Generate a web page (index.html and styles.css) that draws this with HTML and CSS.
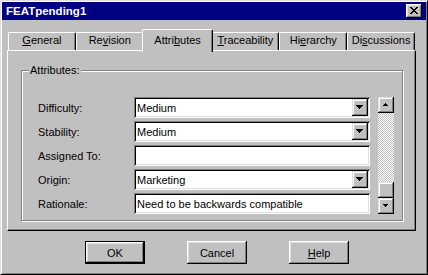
FILE: index.html
```html
<!DOCTYPE html>
<html>
<head>
<meta charset="utf-8">
<link rel="stylesheet" href="styles.css">
</head>
<body>
<div class="window">
  <div class="titlebar">
    <span class="title">FEATpending1</span>
    <span class="close"><svg width="8" height="7" viewBox="0 0 8 7" shape-rendering="crispEdges"><path d="M0 0h2v1H0z M6 0h2v1H6z M1 1h2v1H1z M5 1h2v1H5z M2 2h4v1H2z M3 3h2v1H3z M2 4h4v1H2z M1 5h2v1H1z M5 5h2v1H5z M0 6h2v1H0z M6 6h2v1H6z" fill="#000"/></svg></span>
  </div>
  <div class="content">
    <div class="tabs">
      <div class="tab"><u>G</u>eneral</div>
      <div class="tab">Re<u>v</u>ision</div>
      <div class="tab selected">Attri<u>b</u>utes</div>
      <div class="tab"><u>T</u>raceability</div>
      <div class="tab">Hi<u>e</u>rarchy</div>
      <div class="tab">Di<u>s</u>cussions</div>
    </div>
    <div class="panel">
      <div class="group">
        <span class="group-title">Attributes:</span>
        <div class="group-body">
          <div class="rows">
            <div class="row"><span class="label">Difficulty:</span><div class="field"><span class="value">Medium</span><span class="drop"><svg width="7" height="4" viewBox="0 0 7 4" shape-rendering="crispEdges"><path d="M0 0h7v1H0z M1 1h5v1H1z M2 2h3v1H2z M3 3h1v1H3z" fill="#000"/></svg></span></div></div>
            <div class="row"><span class="label">Stability:</span><div class="field"><span class="value">Medium</span><span class="drop"><svg width="7" height="4" viewBox="0 0 7 4" shape-rendering="crispEdges"><path d="M0 0h7v1H0z M1 1h5v1H1z M2 2h3v1H2z M3 3h1v1H3z" fill="#000"/></svg></span></div></div>
            <div class="row"><span class="label">Assigned To:</span><div class="field"><span class="value"></span></div></div>
            <div class="row"><span class="label">Origin:</span><div class="field"><span class="value">Marketing</span><span class="drop"><svg width="7" height="4" viewBox="0 0 7 4" shape-rendering="crispEdges"><path d="M0 0h7v1H0z M1 1h5v1H1z M2 2h3v1H2z M3 3h1v1H3z" fill="#000"/></svg></span></div></div>
            <div class="row"><span class="label">Rationale:</span><div class="field"><span class="value">Need to be backwards compatible</span></div></div>
          </div>
          <div class="scrollbar">
            <span class="sb-btn"><svg width="5" height="3" viewBox="0 0 5 3" shape-rendering="crispEdges"><path d="M2 0h1v1H2z M1 1h3v1H1z M0 2h5v1H0z" fill="#000"/></svg></span>
            <span class="sb-track"></span>
            <span class="sb-thumb"></span>
            <span class="sb-btn"><svg width="5" height="3" viewBox="0 0 5 3" shape-rendering="crispEdges"><path d="M0 0h5v1H0z M1 1h3v1H1z M2 2h1v1H2z" fill="#000"/></svg></span>
          </div>
        </div>
      </div>
    </div>
    <div class="buttons">
      <span class="btn default">OK</span>
      <span class="btn">Cancel</span>
      <span class="btn"><u>H</u>elp</span>
    </div>
  </div>
</div>
</body>
</html>
```

FILE: styles.css
```css
html, body {
  margin: 0;
  padding: 0;
  background: #c0c0c0;
}
body {
  font-family: "Liberation Sans", Arial, sans-serif;
  font-size: 11px;
  color: #000;
}
.window {
  box-sizing: border-box;
  width: 428px;
  height: 275px;
  background: #c0c0c0;
  border: 1px solid;
  border-color: #dfdfdf #000 #000 #dfdfdf;
  box-shadow: inset 1px 1px #fff, inset -1px -1px #808080;
  padding: 1px;
}
.titlebar {
  height: 18px;
  background: #000080;
  display: flex;
  align-items: center;
  justify-content: space-between;
  padding: 0 4px;
}
.title {
  color: #fff;
  font-weight: bold;
  font-size: 11.5px;
  line-height: 18px;
}
.close {
  width: 16px;
  height: 14px;
  box-sizing: border-box;
  background: #c0c0c0;
  box-shadow: inset -1px -1px #000, inset 1px 1px #fff, inset -2px -2px #808080, inset 2px 2px #dfdfdf;
  display: flex;
  align-items: center;
  justify-content: center;
  padding: 0 1px 1px 0;
}
.close svg, .drop svg, .sb-btn svg { display: block; }
.content {
  padding: 9px 10px 0 5px;
}
.tabs {
  display: flex;
  align-items: flex-end;
  height: 21px;
  padding: 0 1px;
}
.tab {
  flex: 1 1 0;
  box-sizing: content-box;
  text-align: center;
  line-height: 13px;
  padding: 1px 0 3px;
  border-top: 1px solid #fff;
  border-left: 1px solid #fff;
  border-right: 1px solid #000;
  border-radius: 2px 2px 0 0;
  box-shadow: inset -1px 0 #808080;
  background: #c0c0c0;
  white-space: nowrap;
}
.tab.selected {
  position: relative;
  z-index: 1;
  padding: 4px 2px 5px;
  margin: 0 -2px -2px;
}
.panel {
  box-sizing: border-box;
  height: 181px;
  border: 1px solid;
  border-color: #fff #000 #000 #fff;
  box-shadow: inset -1px -1px #808080;
  padding: 19px 12px 9px 13px;
}
.group {
  position: relative;
  border: 1px solid #808080;
  box-shadow: inset 1px 1px #fff, 1px 1px #fff;
  padding: 26px 8px 6px 16px;
}
.group-title {
  position: absolute;
  top: -7px;
  left: 7px;
  padding: 0 1px;
  line-height: 13px;
  background: #c0c0c0;
}
.group-body {
  display: flex;
  gap: 8px;
}
.rows {
  display: flex;
  flex-direction: column;
  gap: 3px;
  width: 332px;
}
.row {
  display: flex;
  align-items: center;
  height: 21px;
}
.label {
  width: 96px;
}
.field {
  box-sizing: border-box;
  width: 236px;
  height: 21px;
  background: #fff;
  box-shadow: inset 1px 1px #808080, inset -1px -1px #fff, inset 2px 2px #000, inset -2px -2px #dfdfdf;
  display: flex;
  align-items: center;
  padding: 2px 2px 2px 3px;
}
.value {
  flex: 1;
  white-space: nowrap;
}
.drop {
  box-sizing: border-box;
  width: 16px;
  height: 17px;
  background: #c0c0c0;
  box-shadow: inset -1px -1px #000, inset 1px 1px #dfdfdf, inset -2px -2px #808080, inset 2px 2px #fff;
  display: flex;
  align-items: center;
  justify-content: center;
  padding: 0 1px 1px 0;
}
.scrollbar {
  width: 16px;
  height: 117px;
  display: flex;
  flex-direction: column;
}
.sb-btn, .sb-thumb {
  box-sizing: border-box;
  height: 16px;
  background: #c0c0c0;
  box-shadow: inset -1px -1px #000, inset 1px 1px #dfdfdf, inset -2px -2px #808080, inset 2px 2px #fff;
  display: flex;
  align-items: center;
  justify-content: center;
  padding: 0 1px 1px 0;
}
.sb-track {
  flex: 1;
  background: repeating-conic-gradient(#c0c0c0 0% 25%, #fff 0% 50%) 0 0 / 2px 2px;
}
.buttons {
  display: flex;
  gap: 42px;
  padding: 10px 0 0 78px;
}
.btn {
  box-sizing: border-box;
  width: 60px;
  height: 23px;
  background: #c0c0c0;
  box-shadow: inset -1px -1px #000, inset 1px 1px #fff, inset -2px -2px #808080, inset 2px 2px #dfdfdf;
  display: flex;
  align-items: center;
  justify-content: center;
}
.btn.default {
  border: 1px solid #000;
}
```
